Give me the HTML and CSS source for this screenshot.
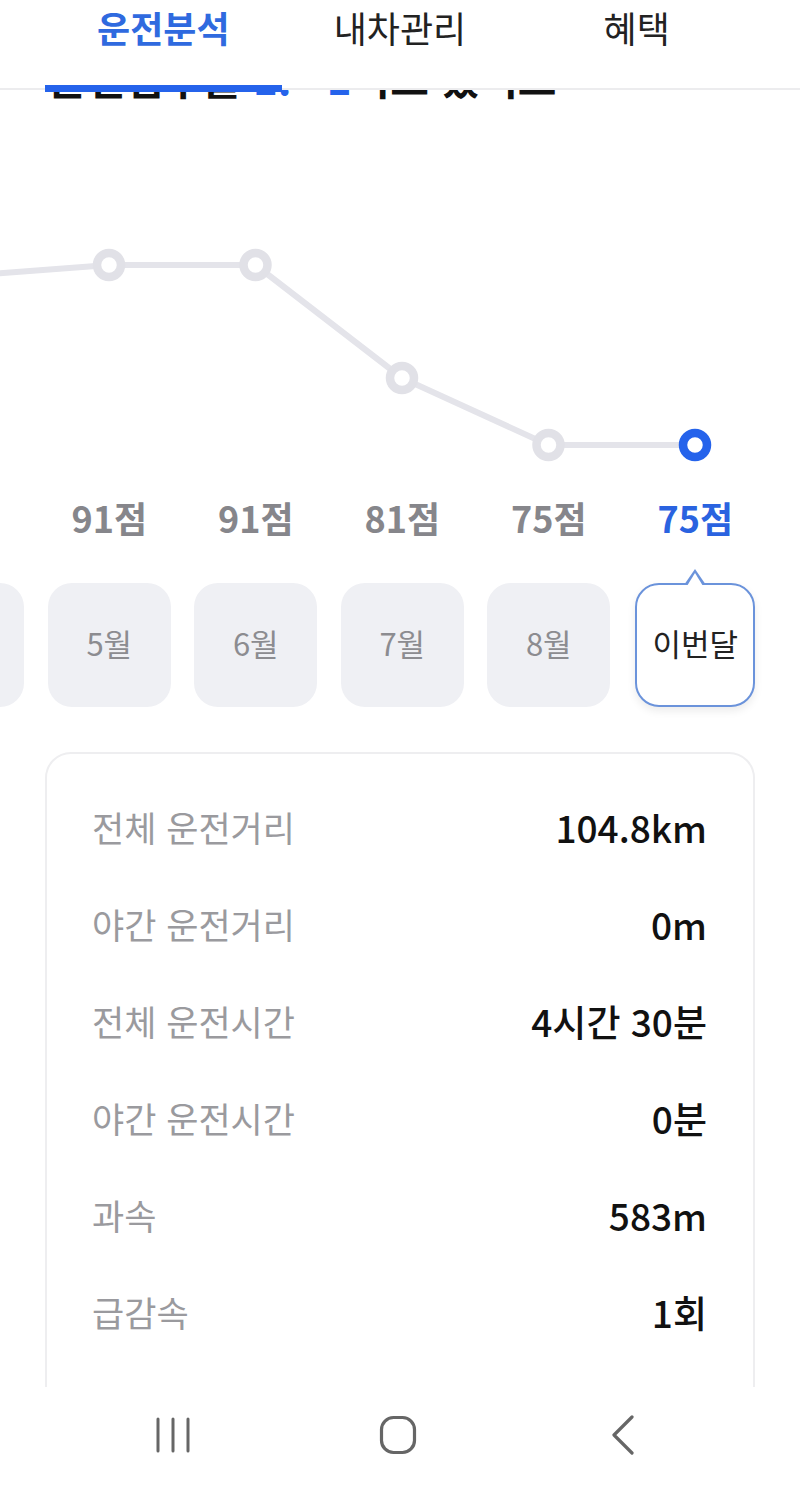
FILE: index.html
```html
<!DOCTYPE html>
<html lang="ko">
<head>
<meta charset="utf-8">
<title>운전분석</title>
<link rel="stylesheet" href="styles.css">
</head>
<body>
<div class="screen">
  <header class="tabs">
    <div class="tab active">운전분석</div>
    <div class="tab">내차관리</div>
    <div class="tab">혜택</div>
  </header>
  <main class="content">
    <div class="peek"><div class="peek-title">운전점수를 <span class="blue">1.</span>&nbsp;&nbsp;&nbsp;<span class="blue">1</span>이고 있어요</div></div>
    <div class="chart">
      <svg class="chart-svg" width="800" height="388" viewBox="0 0 800 388">
        <polyline points="-37.5,176 109,165 255.5,165 402,278 548.5,345 695,345" fill="none" stroke="#e4e4ea" stroke-width="6" stroke-linejoin="round"/>
        <circle cx="109" cy="165" r="12" fill="#fff" stroke="#e1e1e7" stroke-width="8.5"/>
        <circle cx="255.5" cy="165" r="12" fill="#fff" stroke="#e1e1e7" stroke-width="8.5"/>
        <circle cx="402" cy="278" r="12" fill="#fff" stroke="#e1e1e7" stroke-width="8.5"/>
        <circle cx="548.5" cy="345" r="12" fill="#fff" stroke="#e1e1e7" stroke-width="8.5"/>
        <circle cx="695" cy="345" r="12" fill="#fff" stroke="#2563eb" stroke-width="8.5"/>
      </svg>
    </div>
    <div class="strip scores">
      <div class="col score">93점</div>
      <div class="col score">91점</div>
      <div class="col score">91점</div>
      <div class="col score">81점</div>
      <div class="col score">75점</div>
      <div class="col score current">75점</div>
    </div>
    <div class="strip months">
      <div class="col"><div class="pill">4월</div></div>
      <div class="col"><div class="pill">5월</div></div>
      <div class="col"><div class="pill">6월</div></div>
      <div class="col"><div class="pill">7월</div></div>
      <div class="col"><div class="pill">8월</div></div>
      <div class="col"><div class="pill selected">이번달</div></div>
    </div>
    <section class="card">
      <div class="row"><span class="label">전체 운전거리</span><span class="value">104.8km</span></div>
      <div class="row"><span class="label">야간 운전거리</span><span class="value">0m</span></div>
      <div class="row"><span class="label">전체 운전시간</span><span class="value">4시간 30분</span></div>
      <div class="row"><span class="label">야간 운전시간</span><span class="value">0분</span></div>
      <div class="row"><span class="label">과속</span><span class="value">583m</span></div>
      <div class="row"><span class="label">급감속</span><span class="value">1회</span></div>
      <div class="row"><span class="label">급가속</span><span class="value">0회</span></div>
    </section>
  </main>
  <nav class="sysnav">
    <div class="navbtn">
      <svg width="40" height="40" viewBox="0 0 40 40"><g stroke="#666" stroke-width="3" stroke-linecap="round"><line x1="5" y1="4" x2="5" y2="36"/><line x1="20" y1="4" x2="20" y2="36"/><line x1="35" y1="4" x2="35" y2="36"/></g></svg>
    </div>
    <div class="navbtn">
      <svg width="40" height="40" viewBox="0 0 40 40"><rect x="3.5" y="2.5" width="33" height="35" rx="12" fill="none" stroke="#666" stroke-width="3.2"/></svg>
    </div>
    <div class="navbtn">
      <svg width="40" height="40" viewBox="0 0 40 40"><polyline points="29,2 11,20 29,38" fill="none" stroke="#666" stroke-width="3.2" stroke-linecap="round" stroke-linejoin="round"/></svg>
    </div>
  </nav>
</div>
</body>
</html>
```
FILE: styles.css
```css
html, body {
  margin: 0;
  padding: 0;
  background: #fff;
}
body {
  font-family: "Noto Sans CJK KR", "Noto Sans", sans-serif;
  color: #111;
}
.screen {
  width: 800px;
  height: 1491px;
  display: flex;
  flex-direction: column;
  overflow: hidden;
  background: #fff;
}
.tabs {
  flex: 0 0 auto;
  height: 88px;
  border-bottom: 2px solid #ececee;
  display: grid;
  grid-template-columns: 1fr 1fr 1fr;
  padding: 0 45px;
  position: relative;
  z-index: 2;
  background: #fff;
}
.tab {
  position: relative;
  text-align: center;
  font-size: 36px;
  line-height: 54px;
  color: #222;
  font-weight: 400;
}
.tab.active {
  color: #2f6adf;
  font-weight: 700;
}
.tab.active::after {
  content: "";
  position: absolute;
  left: 0;
  right: 0;
  top: 85px;
  height: 7px;
  background: #2563eb;
}
.content {
  flex: 1 1 auto;
  overflow: hidden;
  display: flex;
  flex-direction: column;
}
.peek {
  height: 12px;
  overflow: hidden;
  padding-left: 48px;
  flex: 0 0 auto;
}
.peek-title {
  font-size: 42px;
  font-weight: 700;
  line-height: 50px;
  margin-top: -38px;
  white-space: nowrap;
  color: #111;
}
.blue { color: #2563eb; }
.chart {
  height: 386px;
  flex: 0 0 auto;
}
.chart-svg {
  display: block;
  overflow: visible;
  margin-top: -2px;
}
.strip {
  display: flex;
  flex: 0 0 auto;
  margin-left: -110.5px;
}
.col {
  flex: 0 0 146.5px;
  display: flex;
  justify-content: center;
}
.scores {
  height: 60px;
}
.score {
  font-size: 36px;
  line-height: 58px;
  font-weight: 700;
  color: #86868b;
}
.score.current {
  color: #2a63e0;
}
.months {
  padding-top: 35px;
  height: 124px;
}
.pill {
  width: 123px;
  height: 124px;
  border-radius: 24px;
  background: #eff0f4;
  display: flex;
  align-items: center;
  justify-content: center;
  font-size: 31px;
  color: #8c8c90;
  box-sizing: border-box;
  position: relative;
  padding-bottom: 5px;
}
.pill.selected {
  width: 120px;
  background: #fff;
  border: 2px solid #6b93db;
  color: #222;
  box-shadow: 0 4px 8px rgba(0,0,0,0.08);
}
.pill.selected::before {
  content: "";
  position: absolute;
  top: -16px;
  left: 50%;
  margin-left: -11px;
  width: 0;
  height: 0;
  border-left: 11px solid transparent;
  border-right: 11px solid transparent;
  border-bottom: 16px solid #6b93db;
}
.pill.selected::after {
  content: "";
  position: absolute;
  top: -12px;
  left: 50%;
  margin-left: -8px;
  width: 0;
  height: 0;
  border-left: 8px solid transparent;
  border-right: 8px solid transparent;
  border-bottom: 13px solid #fff;
}
.card {
  flex: 0 0 auto;
  margin: 45px 45px 0;
  border: 2px solid #eeeef0;
  border-radius: 26px;
  padding: 24px 46px 0 45px;
}
.row {
  height: 97px;
  display: flex;
  align-items: center;
  justify-content: space-between;
}
.label {
  font-size: 35px;
  color: #9a9a9e;
  font-weight: 400;
}
.value {
  font-size: 37px;
  color: #111;
  font-weight: 500;
}
.sysnav {
  flex: 0 0 104px;
  height: 104px;
  background: #fff;
  display: flex;
  justify-content: center;
  align-items: center;
  gap: 185px;
  padding-right: 4px;
  padding-bottom: 8px;
  box-sizing: border-box;
}
.navbtn {
  width: 40px;
  height: 40px;
}
.navbtn svg { display: block; }
```
